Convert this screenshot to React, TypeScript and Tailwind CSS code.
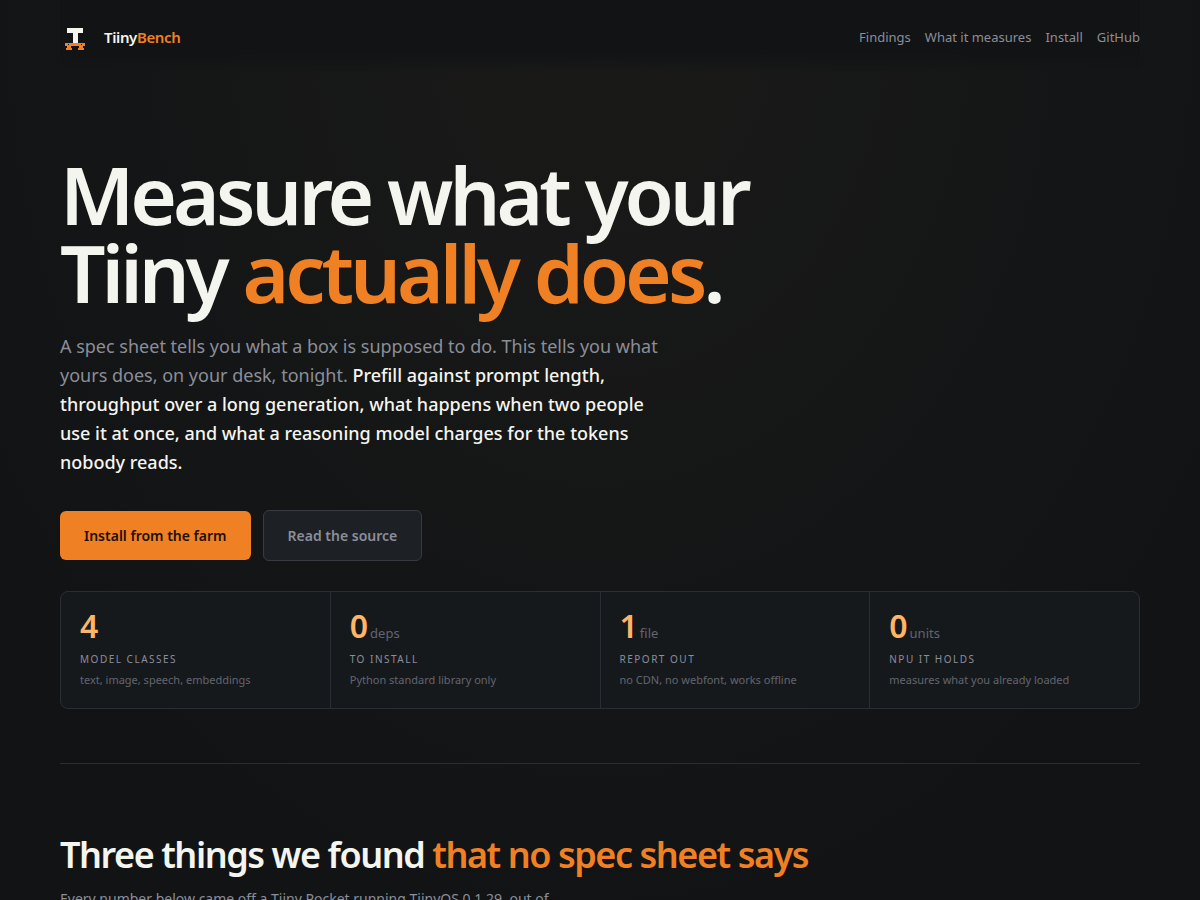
const links = [
  { label: "Findings", href: "#findings" },
  { label: "What it measures", href: "#measures" },
  { label: "Install", href: "#install" },
  { label: "GitHub", href: "#github" },
];

const stats = [
  { value: "4", unit: "", label: "Model classes", note: "text, image, speech, embeddings" },
  { value: "0", unit: "deps", label: "To install", note: "Python standard library only" },
  { value: "1", unit: "file", label: "Report out", note: "no CDN, no webfont, works offline" },
  { value: "0", unit: "units", label: "NPU it holds", note: "measures what you already loaded" },
];

function Logo() {
  return (
    <svg className="size-[30px]" viewBox="0 0 30 30" shapeRendering="crispEdges" aria-hidden="true">
      <path fill="#f5f5ef" d="M7 6h16v5h-5v10h-5V11H7z" />
      <path fill="#f08024" d="M5 21h20v3h-2v2h1v2h-6v-2h1v-2h-8v2h1v2H6v-2h1v-2H5z" />
      <path fill="#111315" d="M8 22h1v1H8zM21 22h1v1h-1z" />
    </svg>
  );
}

function Header() {
  return (
    <header className="sticky top-0 z-10 flex items-center justify-between bg-linear-to-b from-[#111315] from-70% to-transparent py-[22px]">
      <a href="#top" className="flex items-center gap-3.5 text-[15px] leading-6 font-semibold tracking-tight text-[#f5f5ef]">
        <Logo />
        <span>
          Tiiny<span className="text-[#f08024]">Bench</span>
        </span>
      </a>
      <nav className="flex gap-3.5 text-[13px] leading-5 text-[#8b8e99]">
        {links.map((link) => (
          <a key={link.label} href={link.href}>
            {link.label}
          </a>
        ))}
      </nav>
    </header>
  );
}

function Hero() {
  return (
    <section id="top" className="border-b border-[#2a2d33] pt-[81px] pb-[54px]">
      <h1 className="max-w-[760px] text-[80px] leading-[78px] font-semibold tracking-tighter text-[#f5f5ef]">
        Measure what your Tiiny <span className="text-[#f08024]">actually does</span>.
      </h1>
      <p className="mt-[21px] max-w-[600px] text-lg leading-[29px] text-[#8b8e99]">
        A spec sheet tells you what a box is supposed to do. This tells you what yours does, on your desk, tonight.{" "}
        <strong className="font-medium text-[#f5f5ef]">
          Prefill against prompt length, throughput over a long generation, what happens when two people use it at
          once, and what a reasoning model charges for the tokens nobody reads.
        </strong>
      </p>
      <div className="mt-[33px] flex flex-wrap items-center gap-3 text-sm leading-[21px] font-semibold">
        <a href="#install" className="rounded-md bg-[#f08024] px-6 py-3.5 text-[#1f1008]">
          Install from the farm
        </a>
        <a href="#source" className="rounded-md border border-[#373a42] bg-[#1d2025] px-6 py-3.5 text-[#8b8e99]">
          Read the source
        </a>
      </div>
      <dl className="mt-[30px] grid grid-cols-2 gap-px overflow-hidden rounded-lg border border-[#2a2d33] bg-[#2a2d33] md:grid-cols-4">
        {stats.map((stat) => (
          <div key={stat.label} className="flex flex-col bg-[#16191c] px-[19px] pt-[18px] pb-5">
            <dd className="flex items-baseline gap-0.5 text-[32px] leading-8 font-semibold text-[#ffb566]">
              {stat.value}
              {stat.unit && <span className="text-[13px] leading-4 font-normal text-[#62656f]">{stat.unit}</span>}
            </dd>
            <dt className="mt-[9px] text-[10px] leading-4 tracking-[0.15em] text-[#8b8e99] uppercase">{stat.label}</dt>
            <dd className="mt-[5px] text-[11px] leading-4 text-[#62656f]">{stat.note}</dd>
          </div>
        ))}
      </dl>
    </section>
  );
}

function Findings() {
  return (
    <section id="findings" className="pt-[68px] pb-20">
      <h2 className="text-[36px] leading-[46px] font-semibold tracking-[-0.04em] text-[#f5f5ef]">
        Three things we found <span className="text-[#f08024]">that no spec sheet says</span>
      </h2>
      <p className="mt-2.5 max-w-[520px] text-sm leading-[22px] text-[#8b8e99]">
        Every number below came off a Tiiny Pocket running TiinyOS 0.1.29, out of
      </p>
    </section>
  );
}

export default function App() {
  return (
    <div className="min-h-screen bg-[#111315] bg-[radial-gradient(ellipse_60%_95%_at_50%_0%,rgba(190,160,80,0.05),transparent)] px-5 font-['Noto_Sans',sans-serif] md:px-[60px]">
      <div className="mx-auto max-w-[1080px]">
        <Header />
        <main>
          <Hero />
          <Findings />
        </main>
      </div>
    </div>
  );
}
